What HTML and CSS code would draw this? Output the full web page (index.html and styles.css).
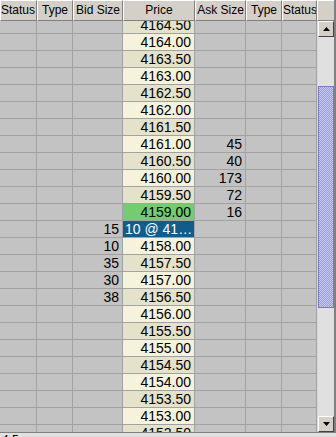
FILE: index.html
```html
<!DOCTYPE html>
<html>
<head>
<meta charset="utf-8">
<link rel="stylesheet" href="styles.css">
</head>
<body>
<div class="frame">
  <div class="main">
    <div class="grid">
      <div class="head">
        <div class="hc c1">Status</div>
        <div class="hc c2">Type</div>
        <div class="hc c3">Bid Size</div>
        <div class="hc c4">Price</div>
        <div class="hc c5">Ask Size</div>
        <div class="hc c6">Type</div>
        <div class="hc c7">Status</div>
      </div>
      <div class="body">
        <div class="rows">
          <div class="row"><div class="c"></div><div class="c"></div><div class="c num"></div><div class="c price dk">4164.50</div><div class="c num"></div><div class="c"></div><div class="c"></div></div>
          <div class="row"><div class="c"></div><div class="c"></div><div class="c num"></div><div class="c price">4164.00</div><div class="c num"></div><div class="c"></div><div class="c"></div></div>
          <div class="row"><div class="c"></div><div class="c"></div><div class="c num"></div><div class="c price dk">4163.50</div><div class="c num"></div><div class="c"></div><div class="c"></div></div>
          <div class="row"><div class="c"></div><div class="c"></div><div class="c num"></div><div class="c price">4163.00</div><div class="c num"></div><div class="c"></div><div class="c"></div></div>
          <div class="row"><div class="c"></div><div class="c"></div><div class="c num"></div><div class="c price dk">4162.50</div><div class="c num"></div><div class="c"></div><div class="c"></div></div>
          <div class="row"><div class="c"></div><div class="c"></div><div class="c num"></div><div class="c price">4162.00</div><div class="c num"></div><div class="c"></div><div class="c"></div></div>
          <div class="row"><div class="c"></div><div class="c"></div><div class="c num"></div><div class="c price dk">4161.50</div><div class="c num"></div><div class="c"></div><div class="c"></div></div>
          <div class="row"><div class="c"></div><div class="c"></div><div class="c num"></div><div class="c price">4161.00</div><div class="c num">45</div><div class="c"></div><div class="c"></div></div>
          <div class="row"><div class="c"></div><div class="c"></div><div class="c num"></div><div class="c price dk">4160.50</div><div class="c num">40</div><div class="c"></div><div class="c"></div></div>
          <div class="row"><div class="c"></div><div class="c"></div><div class="c num"></div><div class="c price">4160.00</div><div class="c num">173</div><div class="c"></div><div class="c"></div></div>
          <div class="row"><div class="c"></div><div class="c"></div><div class="c num"></div><div class="c price dk">4159.50</div><div class="c num">72</div><div class="c"></div><div class="c"></div></div>
          <div class="row"><div class="c"></div><div class="c"></div><div class="c num"></div><div class="c price last">4159.00</div><div class="c num">16</div><div class="c"></div><div class="c"></div></div>
          <div class="row"><div class="c"></div><div class="c"></div><div class="c num">15</div><div class="c order">10 @ 4158.50</div><div class="c num"></div><div class="c"></div><div class="c"></div></div>
          <div class="row"><div class="c"></div><div class="c"></div><div class="c num">10</div><div class="c price">4158.00</div><div class="c num"></div><div class="c"></div><div class="c"></div></div>
          <div class="row"><div class="c"></div><div class="c"></div><div class="c num">35</div><div class="c price dk">4157.50</div><div class="c num"></div><div class="c"></div><div class="c"></div></div>
          <div class="row"><div class="c"></div><div class="c"></div><div class="c num">30</div><div class="c price">4157.00</div><div class="c num"></div><div class="c"></div><div class="c"></div></div>
          <div class="row"><div class="c"></div><div class="c"></div><div class="c num">38</div><div class="c price dk">4156.50</div><div class="c num"></div><div class="c"></div><div class="c"></div></div>
          <div class="row"><div class="c"></div><div class="c"></div><div class="c num"></div><div class="c price">4156.00</div><div class="c num"></div><div class="c"></div><div class="c"></div></div>
          <div class="row"><div class="c"></div><div class="c"></div><div class="c num"></div><div class="c price dk">4155.50</div><div class="c num"></div><div class="c"></div><div class="c"></div></div>
          <div class="row"><div class="c"></div><div class="c"></div><div class="c num"></div><div class="c price">4155.00</div><div class="c num"></div><div class="c"></div><div class="c"></div></div>
          <div class="row"><div class="c"></div><div class="c"></div><div class="c num"></div><div class="c price dk">4154.50</div><div class="c num"></div><div class="c"></div><div class="c"></div></div>
          <div class="row"><div class="c"></div><div class="c"></div><div class="c num"></div><div class="c price">4154.00</div><div class="c num"></div><div class="c"></div><div class="c"></div></div>
          <div class="row"><div class="c"></div><div class="c"></div><div class="c num"></div><div class="c price dk">4153.50</div><div class="c num"></div><div class="c"></div><div class="c"></div></div>
          <div class="row"><div class="c"></div><div class="c"></div><div class="c num"></div><div class="c price">4153.00</div><div class="c num"></div><div class="c"></div><div class="c"></div></div>
          <div class="row"><div class="c"></div><div class="c"></div><div class="c num"></div><div class="c price dk">4152.50</div><div class="c num"></div><div class="c"></div><div class="c"></div></div>
        </div>
      </div>
    </div>
    <div class="side">
      <div class="corner"></div>
      <div class="sbar">
        <div class="sbtn"><svg width="7" height="4" viewBox="0 0 7 4"><path d="M3.5 0 L7 4 L0 4 Z" fill="#000"/></svg></div>
        <div class="track">
          <div class="gap-top"></div>
          <div class="thumb"></div>
          <div class="gap-bot"></div>
        </div>
        <div class="sbtn"><svg width="7" height="4" viewBox="0 0 7 4"><path d="M0 0 L7 0 L3.5 4 Z" fill="#000"/></svg></div>
      </div>
    </div>
  </div>
  <div class="status">4.5</div>
</div>
</body>
</html>
```

FILE: styles.css
```css
* { box-sizing: border-box; }
html, body { margin: 0; padding: 0; }
body {
  width: 336px;
  height: 437px;
  overflow: hidden;
  background: #d4d0c8;
  font-family: "Liberation Sans", Arial, sans-serif;
}
.frame {
  width: 336px;
  height: 437px;
  display: flex;
  flex-direction: column;
}
.main {
  height: 433px;
  display: flex;
  border-bottom: 1px solid #808080;
}
.grid {
  width: 317px;
  display: flex;
  flex-direction: column;
}
.head {
  height: 21px;
  display: grid;
  grid-template-columns: 37px 36px 50px 72px 51px 36px 35px;
}
.hc {
  background: #d4d0c8;
  border-top: 1px solid #ffffff;
  border-left: 1px solid #ffffff;
  border-right: 1px solid #808080;
  border-bottom: 1px solid #808080;
  font-size: 12px;
  line-height: 18px;
  text-align: center;
  white-space: nowrap;
  overflow: hidden;
  color: #000;
}
.hc.c1 { text-align: left; padding-left: 0; }
.body {
  flex: 1;
  overflow: hidden;
  background: #c0c0c0;
}
.rows {
  margin-top: -4px;
}
.row {
  height: 17px;
  display: grid;
  grid-template-columns: 37px 36px 50px 72px 51px 36px 35px;
}
.c {
  background: #c3c3c3;
  border-right: 1px solid #a2a2a2;
  border-bottom: 1px solid #a2a2a2;
  font-size: 14px;
  line-height: 16px;
  color: #000;
  white-space: nowrap;
  overflow: hidden;
}
.num { text-align: right; padding-right: 3px; }
.price {
  text-align: right;
  padding-right: 3px;
  background: #f5f3dc;
}
.price.dk { background: #e4e2ca; }
.price.last { background: #72cc70; }
.order {
  background: #125c8c;
  color: #ffffff;
  padding-left: 2px;
  text-overflow: ellipsis;
}
.side {
  width: 19px;
  display: flex;
  flex-direction: column;
  border-right: 2px solid #808080;
}
.corner {
  height: 21px;
  background: #d4d0c8;
  border-top: 1px solid #ffffff;
  border-left: 1px solid #ffffff;
  border-bottom: 1px solid #808080;
}
.sbar {
  flex: 1;
  display: flex;
  flex-direction: column;
  padding-left: 1px;
  background: #d8d8d8;
}
.sbtn {
  height: 16px;
  background: #d4d0c8;
  border-top: 1px solid #ffffff;
  border-left: 1px solid #ffffff;
  border-right: 1px solid #404040;
  border-bottom: 1px solid #404040;
  display: flex;
  align-items: center;
  justify-content: center;
}
.track {
  flex: 1;
  display: flex;
  flex-direction: column;
  background: #e0e0e0;
}
.gap-top { height: 49px; }
.thumb {
  height: 222px;
  border: 1px solid #7a7ac4;
  background-color: #b4b4ec;
  background-image: conic-gradient(#9c9ce0 25%, #c8c8f4 0 50%, #9c9ce0 0 75%, #c8c8f4 0);
  background-size: 2px 2px;
}
.gap-bot { flex: 1; }
.status {
  height: 4px;
  overflow: hidden;
  font-size: 12px;
  line-height: 14px;
  padding-left: 2px;
  background: #e0e0e0;
  color: #000;
}
```
